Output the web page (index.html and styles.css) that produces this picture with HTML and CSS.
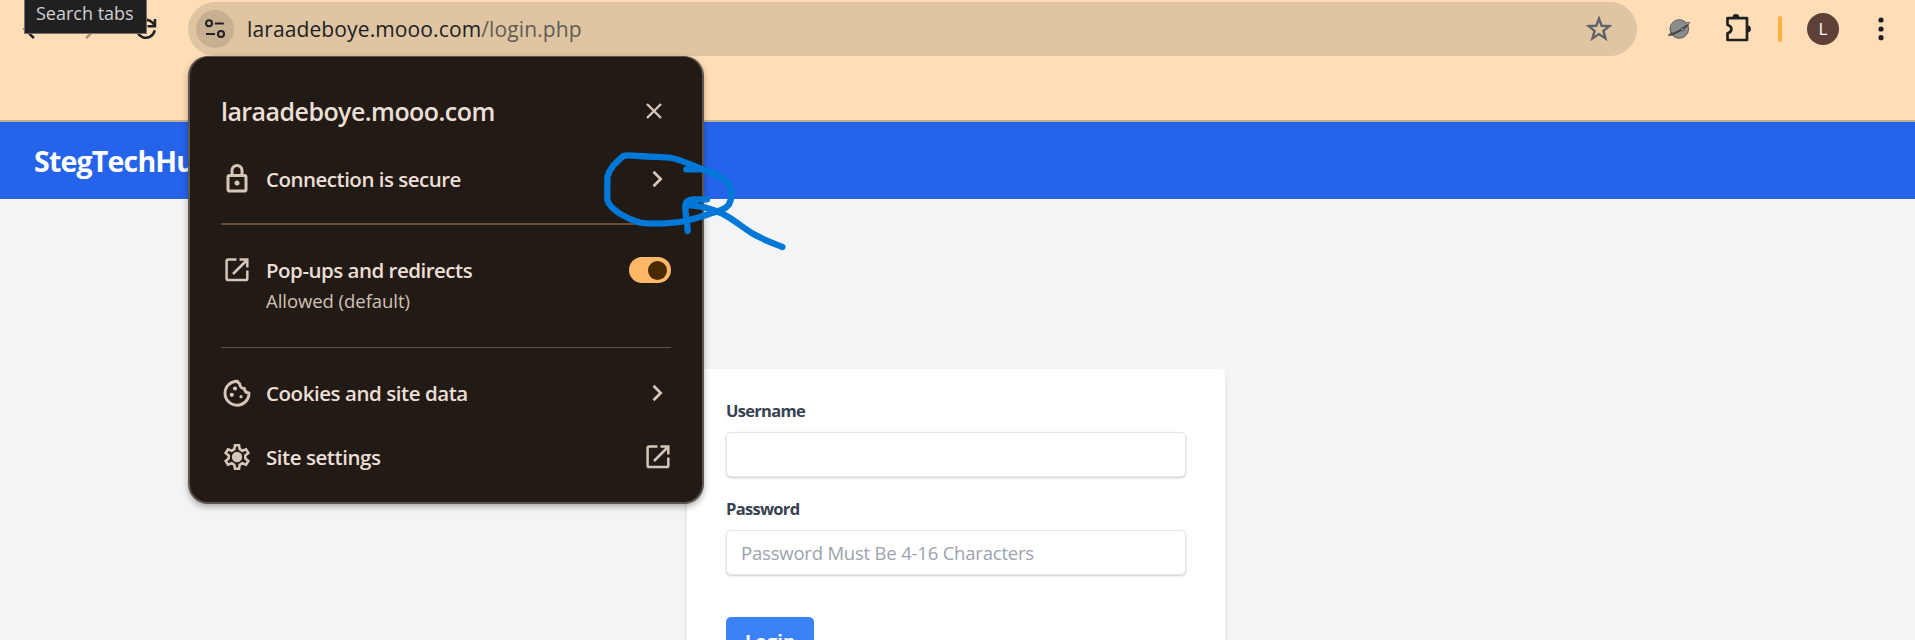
FILE: index.html
```html
<!DOCTYPE html>
<html lang="en">
<head>
<meta charset="utf-8">
<title>StegTechHub - Login</title>
<link rel="stylesheet" href="styles.css">
</head>
<body>
<header class="chrome">
  <div class="toolbar">
    <nav class="nav">
      <svg class="nav-icon" viewBox="0 0 24 24"><path d="M20 11H7.83l5.59-5.59L12 4l-8 8 8 8 1.41-1.41L7.83 13H20z"/></svg>
      <svg class="nav-icon muted" viewBox="0 0 24 24"><path d="M4 11h12.17l-5.59-5.59L12 4l8 8-8 8-1.41-1.41L16.17 13H4z"/></svg>
      <svg class="nav-icon" viewBox="0 0 30 30"><g fill="none" stroke="#202124" stroke-width="2.5"><path d="M23.7 16.2A9 9 0 1 1 21.6 8.8L23 10.4M24 5v7.3h-7.5"/></g></svg>
    </nav>
    <div class="omnibox">
      <span class="site-chip">
        <svg width="24" height="24" viewBox="0 0 24 24" fill="none" stroke="#202124" stroke-width="2.1"><circle cx="6" cy="6.3" r="3"/><path d="M11.8 6.5h9M3 17h9"/><circle cx="18" cy="17" r="3"/></svg>
      </span>
      <span class="url">laraadeboye.mooo.com<span class="path">/login.php</span></span>
      <svg class="star" width="26" height="26" viewBox="0 0 26 26"><path d="M13 2.6l2.7 7.2 7.7.3-6 4.8 2.1 7.5L13 18.1l-6.500 4.300 2.100-7.500-6-4.800 7.700-.3z" fill="none" stroke="#5f6368" stroke-width="2.400"/></svg>
    </div>
    <svg class="planet" width="24" height="24" viewBox="0 0 24 24"><circle cx="12.3" cy="12" r="9.3" fill="#8b8c8b" stroke="#555a5c" stroke-width="1"/><path d="M5 15.5C1 18 .8 19 3 18.4c5-1.200 14-6.500 18-10.500 2.400-2.400 1.500-3.200-1.500-1.900" fill="none" stroke="#555" stroke-width="1.100"/><path d="M4 17.600C10 15.500 16 12 20.500 8" stroke="#454545" stroke-width="1.900" fill="none"/><circle cx="15.500" cy="12.500" r="1.500" fill="#999" stroke="#454545"/></svg>
    <svg class="puzzle" width="28" height="30" viewBox="0 0 28 30"><path d="M3.500 5.200H23V27H3.500V20.300C8.700 19 8.700 13.200 3.500 12z" fill="none" stroke="#202124" stroke-width="2.700" stroke-linejoin="round"/><path d="M8.500 4.500a3.400 3.400 0 0 1 6.800 0zM23.500 12.600a3.400 3.400 0 0 1 0 6.800z" fill="#202124"/></svg>
    <span class="divider-bar"></span>
    <span class="avatar">L</span>
    <svg class="kebab" width="6" height="26" viewBox="0 0 6 26" fill="#202124"><circle cx="3" cy="4" r="2.600"/><circle cx="3" cy="13" r="2.600"/><circle cx="3" cy="21.700" r="2.600"/></svg>
  </div>
</header>
<div class="tooltip">Search tabs</div>

<div class="site-header"><span class="brand">StegTechHub</span></div>
<main class="page">
  <form class="card">
    <label class="label" for="user">Username</label>
    <input class="field" id="user" type="text">
    <label class="label" for="pass">Password</label>
    <input class="field" id="pass" type="password" placeholder="Password Must Be 4-16 Characters">
    <button class="login" type="button">Login</button>
  </form>
</main>

<section class="popup">
  <div class="popup-head">
    <h2 class="host">laraadeboye.mooo.com</h2>
    <svg class="close" width="18" height="18" viewBox="0 0 18 18"><path d="M2 2l14 14M16 2L2 16" stroke="#d7c8bb" stroke-width="2.400"/></svg>
  </div>
  <div class="row secure">
    <svg class="row-icon" viewBox="0 0 28 32"><g fill="none" stroke="#d5c6ba" stroke-width="3"><rect x="5" y="12.500" width="18" height="15.500" rx="1.600"/><path d="M9 12.500V7.400a5 5 0 0 1 10 0V12.500"/></g><circle cx="14" cy="20" r="2.500" fill="#d5c6ba"/></svg>
    <span class="row-text t-secure">Connection is secure</span>
    <svg class="chev" viewBox="0 0 12 18"><path d="M1.500 1.800L8.700 9l-7.200 7.200"/></svg>
  </div>
  <hr class="rule thick">
  <div class="row popups">
    <svg class="row-icon" viewBox="0 0 28 32"><g fill="none" stroke="#d5c6ba" stroke-width="2.500"><path d="M13.500 5.500H5.200a1.600 1.600 0 0 0-1.600 1.600v17.300A1.600 1.600 0 0 0 5.200 26h17.500a1.600 1.600 0 0 0 1.600-1.600V16.500M16.500 5.500h7.800v8M24 6L10 20"/></g></svg>
    <span class="row-text t-popups">Pop-ups and redirects</span>
    <span class="toggle"><span class="knob"></span></span>
  </div>
  <div class="sub">Allowed (default)</div>
  <hr class="rule">
  <div class="row cookies">
    <svg class="row-icon" viewBox="0 0 28 32"><path d="M14.500 4.200A12 12 0 1 0 26 16a5 5 0 0 1-4.600-4.500 4.600 4.600 0 0 1-4.700-4.700 4.500 4.500 0 0 1-2.200-2.600z" fill="none" stroke="#d5c6ba" stroke-width="2.900" stroke-linejoin="round"/><g fill="#d5c6ba"><circle cx="12" cy="11.500" r="2.100"/><circle cx="8.800" cy="17.800" r="2.100"/><circle cx="18" cy="19.700" r="1.600"/></g></svg>
    <span class="row-text t-cookies">Cookies and site data</span>
    <svg class="chev" viewBox="0 0 12 18"><path d="M1.500 1.800L8.700 9l-7.200 7.200"/></svg>
  </div>
  <div class="row settings">
    <svg class="row-icon" viewBox="0 0 28 32"><path d="M12 4.300h4l.7 3.900 2.600 1.500 3.700-1.400 2.300 3.700-3 2.500v3l3 2.500-2.300 3.700-3.700-1.400-2.600 1.500-.7 3.900h-4l-.7-3.900-2.600-1.500L5 23.700 2.700 20l3-2.500v-3l-3-2.500L5 8.300l3.700 1.400 2.600-1.500z" fill="none" stroke="#d5c6ba" stroke-width="2.600"/><circle cx="14" cy="16" r="5.200" fill="#d5c6ba"/></svg>
    <span class="row-text t-settings">Site settings</span>
    <svg class="launch" viewBox="0 0 28 32"><g fill="none" stroke="#d5c6ba" stroke-width="2.500"><path d="M13.500 5.500H5.200a1.600 1.600 0 0 0-1.600 1.600v17.300A1.600 1.600 0 0 0 5.200 26h17.500a1.600 1.600 0 0 0 1.600-1.600V16.500M16.500 5.500h7.800v8M24 6L10 20"/></g></svg>
  </div>
</section>

<svg class="ink" width="260" height="220" viewBox="0 0 780 660">
  <path d="M379 358H425C465 367 505 390 511 410C517 430 515 447 507 463C492 483 468 484 445 493C420 501 380 515 350 517C310 521 280 524 240 518C205 508 150 480 142 450V382C148 352 172 335 190 318C200 314 220 318 240 318C275 321 310 321 335 324C370 331 395 347 425 356"/>
  <path d="M441 448H400C385 449 377 454 376 465C374 490 382 510 383 543M385 465C420 466 450 475 487 491C520 508 545 530 575 549C605 567 635 578 667 591"/>
</svg>
</body>
</html>
```
FILE: styles.css
```css
* { box-sizing: border-box; }
body {
  margin: 0;
  height: 640px;
  overflow: hidden;
  position: relative;
  display: flex;
  flex-direction: column;
  background: #f3f4f6;
  font-family: "Open Sans", "Noto Sans", sans-serif;
}
svg { display: block; flex: none; }

.chrome { height: 122px; flex: none; background: #ffdeb7; border-bottom: 2px solid #c4ae90; }
.toolbar { height: 58px; display: flex; align-items: center; padding-left: 18px; }
.nav { display: flex; gap: 26px; width: 170px; flex: none; }
.nav-icon { width: 30px; height: 30px; fill: #202124; }
.muted { fill: #a89078; margin-right: 3px; }
.nav-icon:first-child { margin-right: -2px; }
.omnibox {
  width: 1449px; height: 54px; flex: none;
  display: flex; align-items: center;
  border-radius: 27px; background: #dfc5a2; padding: 0 25px 0 8px;
}
.site-chip {
  width: 38px; height: 38px; border-radius: 50%; background: #c7b091;
  display: flex; align-items: center; justify-content: center;
}
.url { margin-left: 13px; font-size: 21px; line-height: 30px; letter-spacing: 0.12px; color: #202124; white-space: nowrap; }
.path { color: #625b55; }
.star { margin-left: auto; }
.planet { margin-left: 30px; }
.puzzle { margin-left: 33px; margin-bottom: 2px; }
.divider-bar { margin-left: 26px; width: 4px; height: 26px; border-radius: 2px; background: #ffae42; }
.avatar {
  margin-left: 25px; width: 32px; height: 32px; border-radius: 50%; background: #5d4037;
  color: #fff; font-size: 17px; line-height: 32px; text-align: center;
}
.kebab { margin-left: 39px; }

.tooltip {
  position: absolute; left: 24px; top: -7px; width: 123px; height: 41px;
  background: #202020; border: 1px solid #77706a; color: #cfcfcf;
  font-size: 18px; line-height: 38px; padding-left: 11px; white-space: nowrap;
}

.site-header { height: 77px; flex: none; background: #2563eb; display: flex; align-items: center; padding-left: 34px; }
.brand { color: #fff; font-size: 28.5px; font-weight: 700; line-height: 38px; letter-spacing: -0.8px; }
.page { flex: 1; min-height: 0; padding-top: 170px; padding-left: 687px; overflow: hidden; }
.card {
  width: 538px; height: 400px; background: #fff; border-radius: 5px;
  padding: 29px 39px 0;
  display: flex; flex-direction: column; align-items: flex-start;
  box-shadow: 0 5px 7px -1px rgba(0,0,0,.1), 0 2px 5px -2px rgba(0,0,0,.1);
}
.label { height: 24px; margin-bottom: 10px; color: #374151; font-size: 16.5px; font-weight: 700; line-height: 25px; letter-spacing: -0.7px; }
.field {
  width: 460px; height: 45px; flex: none; margin: 0 0 19px; padding: 0 14px;
  border: 1px solid #e5e7eb; border-radius: 5px; background: #fff;
  box-shadow: 0 1px 3px rgba(0,0,0,.1), 0 1px 2px rgba(0,0,0,.1);
  font: 18.5px "Open Sans", sans-serif; letter-spacing: -0.2px;
}
.field::placeholder { color: #9ca3af; }
.login {
  margin: 23px 0 0; width: 88px; height: 46px; flex: none; border: 0; border-radius: 5px; padding: 0;
  background: #3b82f6; color: #fff; font: 700 18.5px "Open Sans", sans-serif;
}

.popup {
  position: absolute; left: 188px; top: 56px; width: 516px; height: 448px;
  border: 2px solid #5d544d; border-top-width: 1px; border-radius: 20px; background: #221a15;
  box-shadow: 0 3px 6px rgba(0,0,0,.3);
  padding: 34px 31px 0;
}
.popup-head { height: 40px; display: flex; align-items: center; }
.host { margin: 0; color: #ecdfd5; font-size: 25px; font-weight: 600; line-height: 40px; letter-spacing: -0.55px; }
.close { margin-left: auto; margin-right: 8px; }
.row { height: 32px; display: flex; align-items: center; }
.row-icon { width: 28px; height: 32px; margin-left: 2px; }
.row-text { margin-left: 15px; color: #ecdfd5; font-size: 20.5px; font-weight: 600; line-height: 32px; white-space: nowrap; letter-spacing: -0.5px; }
.t-cookies, .t-settings { letter-spacing: -0.45px; }
.chev { width: 12px; height: 18px; margin-left: auto; margin-right: 7px; fill: none; stroke: #d7c8bb; stroke-width: 2.7; }
.launch { width: 28px; height: 32px; margin-left: auto; margin-right: -1px; }
.secure { margin-top: 32px; }
.rule { border: 0; margin: 0; height: 1px; background: #645039; }
.thick { height: 2px; margin-top: 28px; background: #644c36; }
.popups { margin-top: 29px; }
.toggle { margin-left: auto; width: 42px; height: 26px; border-radius: 13px; background: #ffb868; padding: 3.500px 0 0 19px; }
.knob { display: block; width: 19px; height: 19px; border-radius: 50%; background: #4a2a00; }
.sub { height: 28px; margin: 1px 0 32px 45px; color: #d0c1b4; font-size: 18.5px; line-height: 28px; letter-spacing: -0.05px; }
.cookies { margin-top: 29px; }
.settings { margin-top: 32px; }

.ink { position: absolute; left: 560px; top: 50px; fill: none; stroke: #0078d7; stroke-width: 19; stroke-linecap: round; stroke-linejoin: round; }
```
